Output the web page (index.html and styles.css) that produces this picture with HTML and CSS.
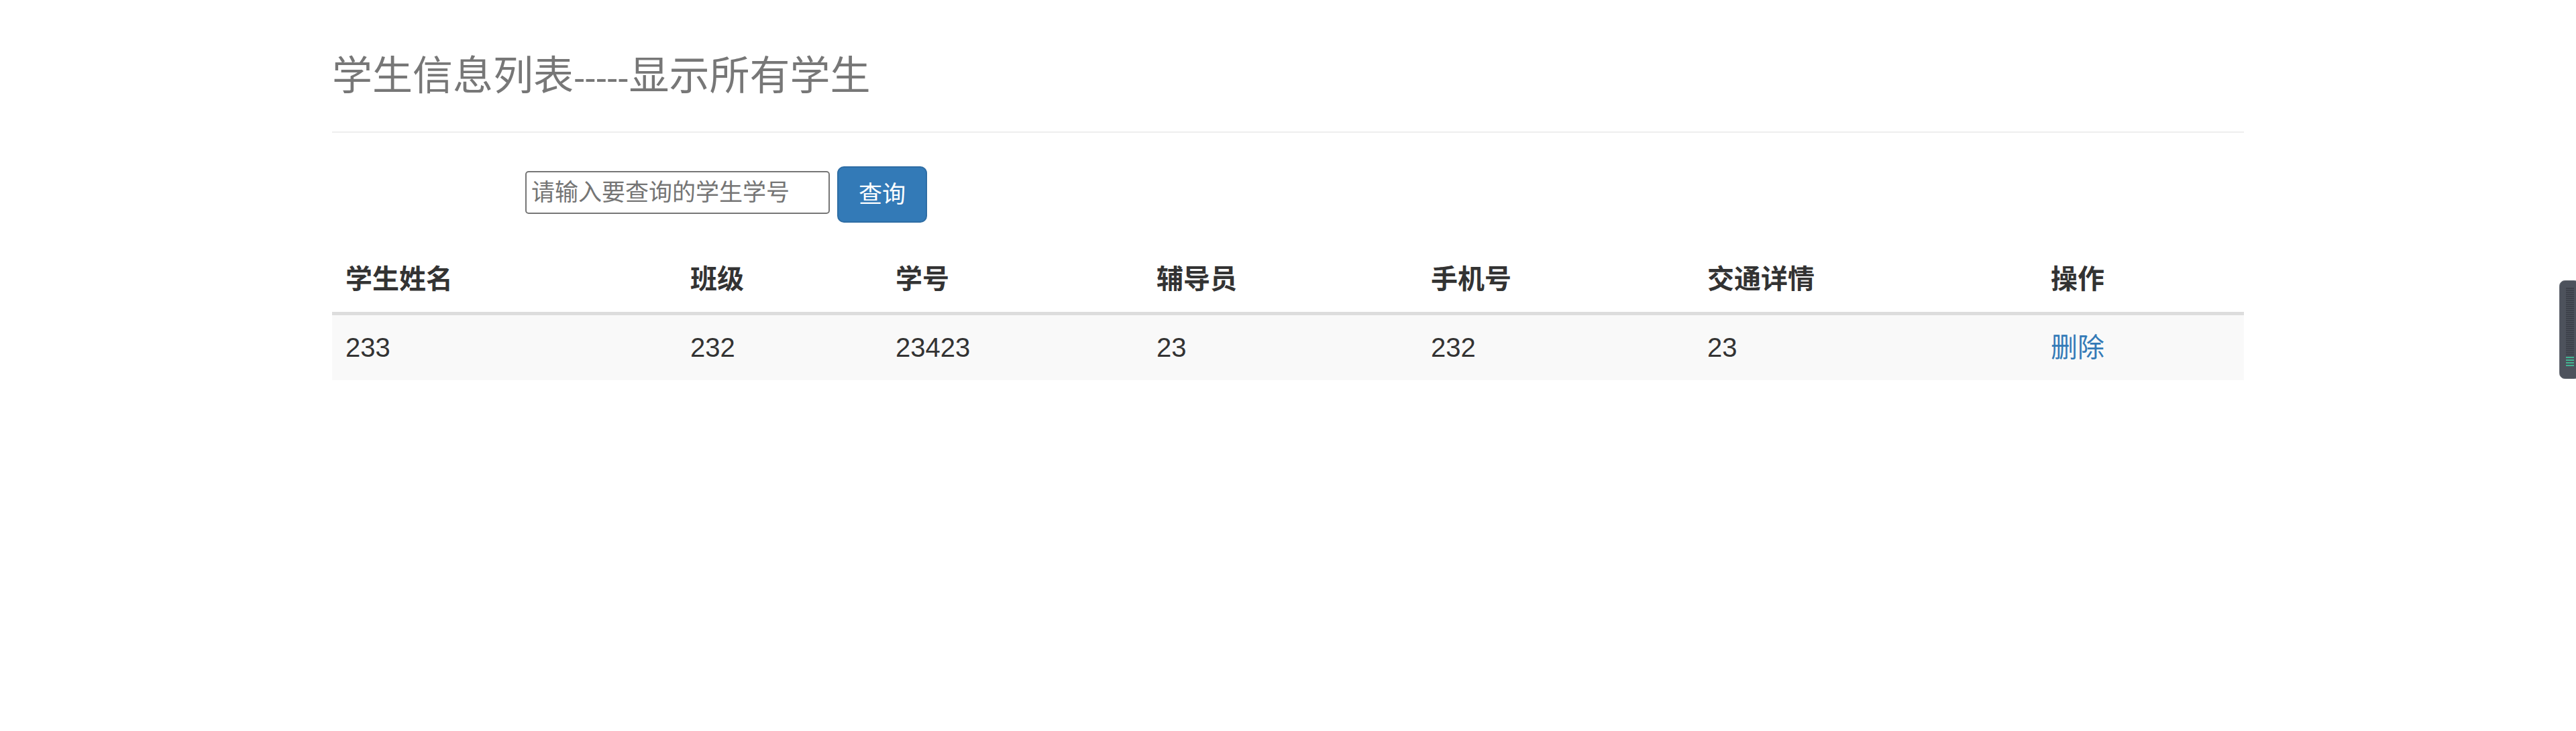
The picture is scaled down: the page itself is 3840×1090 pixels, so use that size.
FILE: index.html
```html
<!DOCTYPE html>
<html lang="zh-CN">
<head>
<meta charset="utf-8">
<title>学生信息列表</title>
<link rel="stylesheet" href="styles.css">
</head>
<body>
<div class="container">
  <div class="page-header">
    <h3 class="title">学生信息列表<span class="dashes">-----</span>显示所有学生</h3>
  </div>
  <form class="search">
    <input class="search-input" type="text" placeholder="请输入要查询的学生学号">
    <button class="btn" type="button">查询</button>
  </form>
  <table class="table">
    <colgroup>
      <col class="col-name">
      <col class="col-class">
      <col class="col-no">
      <col class="col-tutor">
      <col class="col-phone">
      <col class="col-traffic">
      <col class="col-op">
    </colgroup>
    <thead>
      <tr><th>学生姓名</th><th>班级</th><th>学号</th><th>辅导员</th><th>手机号</th><th>交通详情</th><th>操作</th></tr>
    </thead>
    <tbody>
      <tr><td>233</td><td>232</td><td>23423</td><td>23</td><td>232</td><td>23</td><td><a class="link" href="#">删除</a></td></tr>
    </tbody>
  </table>
</div>
<div class="widget">
  <svg width="25" height="147" viewBox="0 0 25 147">
    <rect x="0.5" y="0.5" width="30" height="146" rx="8" fill="#4d525c" stroke="#6a6f78"/>
    <g stroke="#3a3e46" stroke-width="1.5">
      <line x1="10" y1="12" x2="22" y2="12"/><line x1="10" y1="15" x2="22" y2="15"/>
      <line x1="10" y1="18" x2="22" y2="18"/><line x1="10" y1="21" x2="22" y2="21"/>
      <line x1="10" y1="24" x2="22" y2="24"/><line x1="10" y1="27" x2="22" y2="27"/>
      <line x1="10" y1="30" x2="22" y2="30"/><line x1="10" y1="33" x2="22" y2="33"/>
      <line x1="10" y1="36" x2="22" y2="36"/><line x1="10" y1="39" x2="22" y2="39"/>
      <line x1="10" y1="42" x2="22" y2="42"/><line x1="10" y1="45" x2="22" y2="45"/>
      <line x1="10" y1="48" x2="22" y2="48"/><line x1="10" y1="51" x2="22" y2="51"/>
      <line x1="10" y1="54" x2="22" y2="54"/><line x1="10" y1="57" x2="22" y2="57"/>
      <line x1="10" y1="60" x2="22" y2="60"/><line x1="10" y1="63" x2="22" y2="63"/>
      <line x1="10" y1="66" x2="22" y2="66"/><line x1="10" y1="69" x2="22" y2="69"/>
      <line x1="10" y1="72" x2="22" y2="72"/><line x1="10" y1="75" x2="22" y2="75"/>
      <line x1="10" y1="78" x2="22" y2="78"/><line x1="10" y1="81" x2="22" y2="81"/>
      <line x1="10" y1="84" x2="22" y2="84"/><line x1="10" y1="87" x2="22" y2="87"/>
      <line x1="10" y1="90" x2="22" y2="90"/><line x1="10" y1="93" x2="22" y2="93"/>
      <line x1="10" y1="96" x2="22" y2="96"/><line x1="10" y1="99" x2="22" y2="99"/>
      <line x1="10" y1="102" x2="22" y2="102"/><line x1="10" y1="105" x2="22" y2="105"/>
      <line x1="10" y1="108" x2="22" y2="108"/><line x1="10" y1="111" x2="22" y2="111"/>
    </g>
    <g stroke="#3fd6a4" stroke-width="1.5">
      <line x1="10" y1="115" x2="22" y2="115"/><line x1="10" y1="119" x2="22" y2="119"/>
      <line x1="10" y1="123" x2="22" y2="123"/><line x1="10" y1="127" x2="22" y2="127"/>
    </g>
  </svg>
</div>
</body>
</html>
```

FILE: styles.css
```css
html, body {
  margin: 0;
  padding: 0;
  background: #fff;
}

body {
  font-family: "Liberation Sans", "Noto Sans CJK SC", sans-serif;
  color: #333;
}

.container {
  width: 2850px;
  margin: 0 auto;
  padding-top: 81px;
}

.page-header {
  padding-bottom: 24px;
  border-bottom: 2px solid #eee;
  margin-bottom: 50px;
}

.title {
  height: 66px;
  margin: 0 0 25px;
  font-size: 60px;
  line-height: 66px;
  font-weight: 400;
  color: #777;
}

.dashes {
  font-size: 52px;
  line-height: 0;
  letter-spacing: -1px;
  margin-right: 1px;
}

.search {
  display: flex;
  align-items: flex-start;
  padding-left: 288px;
  margin: 0 0 36px;
}

.search-input {
  box-sizing: border-box;
  width: 454px;
  height: 64px;
  margin-top: 7px;
  padding: 0 7px;
  border: 2px solid #767676;
  border-radius: 5px;
  font-family: "Liberation Sans", "Noto Sans CJK SC", sans-serif;
  font-size: 35px;
  color: #333;
  background: #fff;
}

.search-input::placeholder {
  color: #757575;
}

.btn {
  box-sizing: border-box;
  height: 84px;
  margin-left: 11px;
  padding: 0 30px;
  border: 2px solid #2e6da4;
  border-radius: 10px;
  background: #337ab7;
  color: #fff;
  font-family: "Liberation Sans", "Noto Sans CJK SC", sans-serif;
  font-size: 35px;
  line-height: 78px;
}

.table {
  width: 2850px;
  table-layout: fixed;
  border-collapse: separate;
  border-spacing: 0;
  font-size: 40px;
  line-height: 57px;
}

.col-name { width: 514px; }
.col-class { width: 306px; }
.col-no { width: 389px; }
.col-tutor { width: 409px; }
.col-phone { width: 412px; }
.col-traffic { width: 512px; }
.col-op { width: 308px; }

.table th {
  text-align: left;
  padding: 20px;
  font-weight: 700;
  border-bottom: 5px solid #ddd;
}

.table td {
  padding: 20px;
  background: #f9f9f9;
}

.link {
  color: #337ab7;
  text-decoration: none;
}

.widget {
  position: absolute;
  top: 418px;
  right: 0;
  width: 25px;
  height: 147px;
}

.widget svg {
  display: block;
}
```
